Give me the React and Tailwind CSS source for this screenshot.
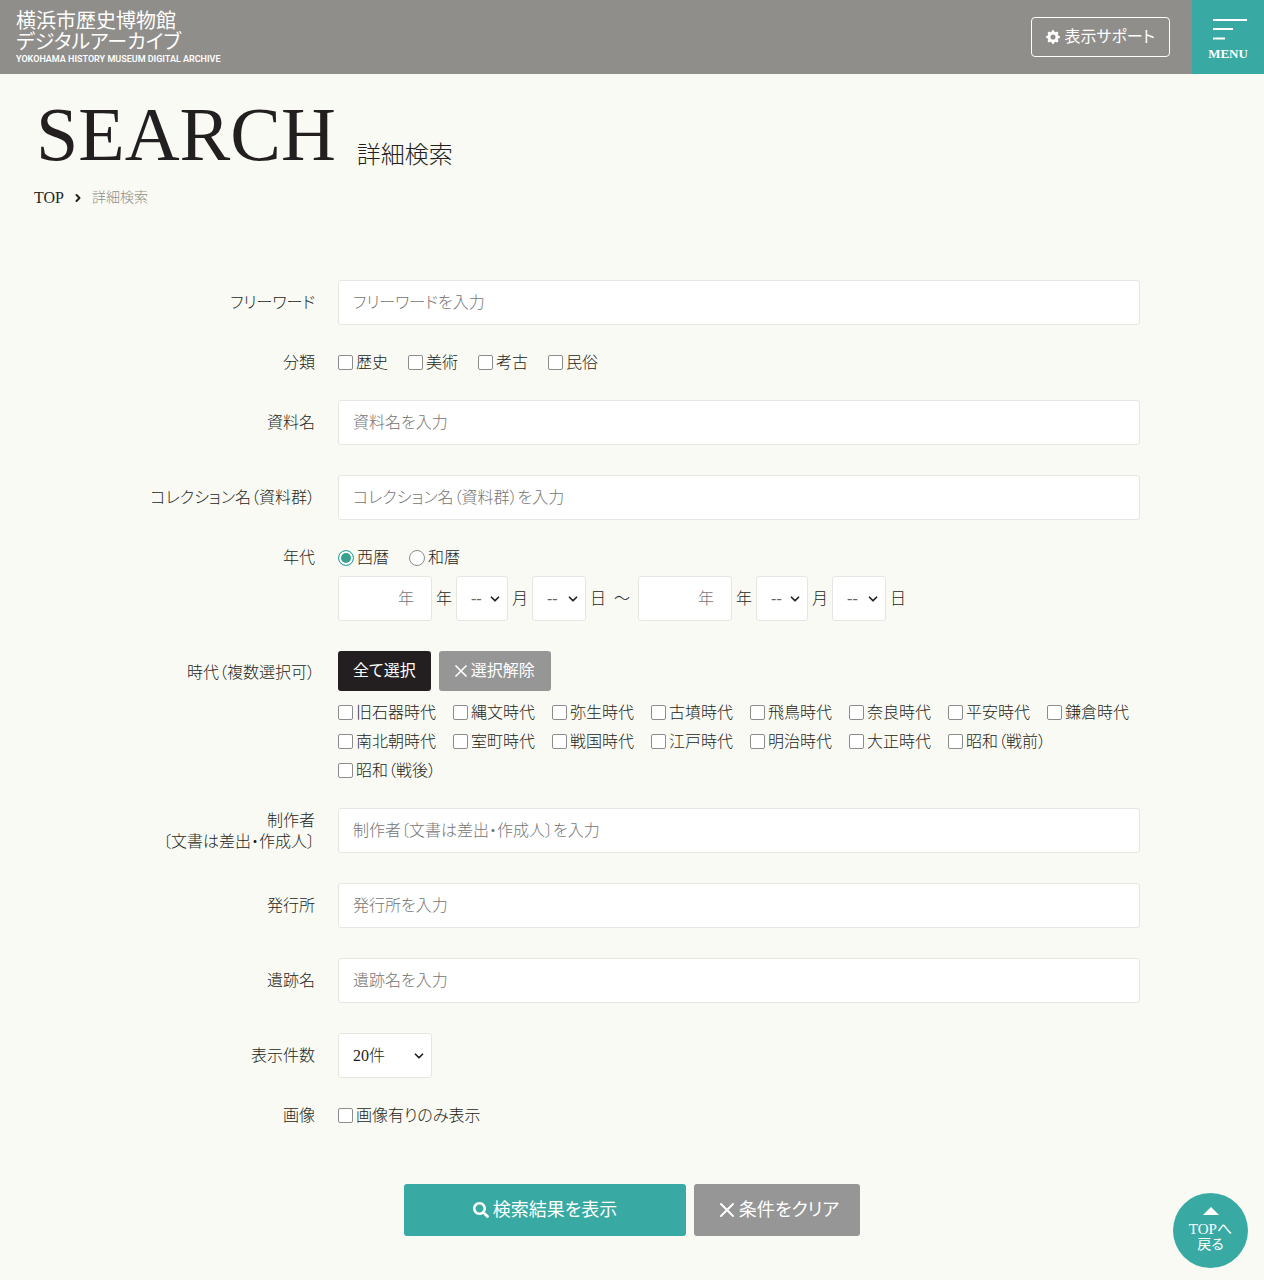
import React, { useState } from "react";
import { ChevronDown, ChevronRight, X } from "lucide-react";
import { BsGearFill } from "react-icons/bs";
import { FaSearch } from "react-icons/fa";

const categories = ["歴史", "美術", "考古", "民俗"];

const eras = [
  "旧石器時代",
  "縄文時代",
  "弥生時代",
  "古墳時代",
  "飛鳥時代",
  "奈良時代",
  "平安時代",
  "鎌倉時代",
  "南北朝時代",
  "室町時代",
  "戦国時代",
  "江戸時代",
  "明治時代",
  "大正時代",
  "昭和（戦前）",
  "昭和（戦後）",
];

const fieldStyle =
  "h-[45px] rounded-[3px] border border-[#e6e7e1] bg-white placeholder:text-[#757575] placeholder:opacity-100";

const months = Array.from({ length: 12 }, (_, i) => i + 1);
const days = Array.from({ length: 31 }, (_, i) => i + 1);

// フォームの1行（見出し＋テキスト入力）
const TextRow = ({ id, label, placeholder }) => (
  <>
    <label htmlFor={id} className="self-center text-right leading-[21px] whitespace-pre-line">
      {label}
    </label>
    <input id={id} type="text" placeholder={placeholder} className={`${fieldStyle} w-full min-w-0 px-3.5`} />
  </>
);

const Check = ({ label, checked, onChange }) => (
  <label className="flex items-center gap-[3px] leading-[15px] whitespace-nowrap">
    <input
      type="checkbox"
      checked={checked}
      onChange={onChange}
      className="size-[15px] shrink-0 appearance-none rounded-[2px] border border-[#8c8c8c] bg-white checked:border-[#38aaa3] checked:bg-[#38aaa3]"
    />
    {label}
  </label>
);

const Radio = ({ label, value, current, onChange }) => (
  <label className="flex items-center gap-[3px] leading-4">
    <input
      type="radio"
      name="calendar"
      value={value}
      checked={current === value}
      onChange={() => onChange(value)}
      className="size-4 shrink-0 appearance-none rounded-full border border-[#8c8c8c] bg-white checked:border-[#38aaa3] checked:bg-[#38a08f] checked:shadow-[inset_0_0_0_2px_white]"
    />
    {label}
  </label>
);

const Select = ({ id, className, children, label }) => (
  <span className={`relative inline-block ${className}`}>
    <select id={id} aria-label={label} className={`${fieldStyle} w-full appearance-none pl-3.5`}>
      {children}
    </select>
    <ChevronDown
      className="pointer-events-none absolute top-4 right-1.5 size-3.5 text-[#231f20]"
      strokeWidth={3}
      aria-hidden="true"
    />
  </span>
);

// 年月日の入力セット
const DateFields = ({ prefix, title }) => (
  <div className="flex items-center gap-1">
    <input
      id={`${prefix}-year`}
      type="text"
      placeholder="年"
      aria-label={`${title}年`}
      className={`${fieldStyle} w-[94px] pr-[17px] text-right`}
    />
    <label htmlFor={`${prefix}-year`}>年</label>
    <Select id={`${prefix}-month`} label={`${title}月`} className="w-[52px] text-[#666]">
      <option value="">--</option>
      {months.map((m) => (
        <option key={m}>{m}</option>
      ))}
    </Select>
    <label htmlFor={`${prefix}-month`}>月</label>
    <Select id={`${prefix}-day`} label={`${title}日`} className="w-[54px] text-[#666]">
      <option value="">--</option>
      {days.map((d) => (
        <option key={d}>{d}</option>
      ))}
    </Select>
    <label htmlFor={`${prefix}-day`}>日</label>
  </div>
);

const Header = () => (
  <header className="flex h-[74px] items-stretch justify-between bg-[#908e8a] text-white">
    <a href="#" className="pt-[11px] pl-4 font-normal">
      <span className="block text-xl leading-[21px]">横浜市歴史博物館</span>
      <span className="block text-xl leading-[21px]">デジタルアーカイブ</span>
      <span className="block font-['Roboto'] text-[9px] leading-3 font-semibold">
        YOKOHAMA HISTORY MUSEUM DIGITAL ARCHIVE
      </span>
    </a>
    <div className="flex items-center gap-[22px]">
      <button
        type="button"
        className="flex h-10 items-center gap-1 rounded-[4px] border border-white px-3.5 font-normal"
      >
        <BsGearFill className="size-3.5" aria-hidden="true" />
        表示サポート
      </button>
      <button
        type="button"
        className="flex h-full w-[72px] flex-col items-center bg-[#38aaa3] pt-[18px] text-[13px] font-bold"
      >
        <svg className="ml-1 h-[22px] w-[34px]" viewBox="0 0 34 22" stroke="white" strokeWidth="2" aria-hidden="true">
          <path d="M0 2h34M0 11h20M0 20.5h12" />
        </svg>
        <span className="mt-1 leading-5">MENU</span>
      </button>
    </div>
  </header>
);

const App = () => {
  const [calendar, setCalendar] = useState("seireki");
  const [selectedCategories, setSelectedCategories] = useState([]);
  const [selectedEras, setSelectedEras] = useState([]);
  const [imageOnly, setImageOnly] = useState(false);

  const toggle = (list, setList, name) =>
    setList(list.includes(name) ? list.filter((n) => n !== name) : [...list, name]);

  const clearAll = () => {
    setCalendar("seireki");
    setSelectedCategories([]);
    setSelectedEras([]);
    setImageOnly(false);
  };

  return (
    <div
      lang="ja"
      className="min-h-screen bg-[#f9faf4] font-['Liberation_Serif','Noto_Sans_CJK_JP',serif] text-base font-light text-[#231f20] [font-feature-settings:'palt']"
    >
      <Header />

      <main className="pb-16">
        <div className="px-[34px] pt-5">
          <h1 className="flex items-end gap-[21px] pl-0.5">
            <span className="text-[76px] leading-[80px]">SEARCH</span>
            <span className="text-2xl leading-[38px]">詳細検索</span>
          </h1>
          <nav aria-label="パンくず" className="mt-3 flex items-center gap-2 leading-6">
            <a href="#">TOP</a>
            <ChevronRight className="size-3" strokeWidth={4} aria-hidden="true" />
            <span className="text-sm leading-6 text-[#8f8f8b]">詳細検索</span>
          </nav>
        </div>

        {/* 検索フォーム */}
        <form
          className="mx-auto mt-[70px] max-w-[1016px]"
          onSubmit={(e) => e.preventDefault()}
          onReset={clearAll}
        >
          <div className="grid grid-cols-[191px_minmax(0,1fr)] gap-x-[23px] gap-y-[30px]">
            <TextRow id="freeword" label="フリーワード" placeholder="フリーワードを入力" />

            <span id="category-label" className="text-right leading-[15px]">分類</span>
            <div role="group" aria-labelledby="category-label" className="flex flex-wrap gap-x-5 gap-y-3.5">
              {categories.map((name) => (
                <Check
                  key={name}
                  label={name}
                  checked={selectedCategories.includes(name)}
                  onChange={() => toggle(selectedCategories, setSelectedCategories, name)}
                />
              ))}
            </div>

            <TextRow id="title" label="資料名" placeholder="資料名を入力" />
            <TextRow
              id="collection"
              label="コレクション名（資料群）"
              placeholder="コレクション名（資料群）を入力"
            />

            <span id="date-label" className="text-right leading-4">年代</span>
            <div role="group" aria-labelledby="date-label">
              <div className="flex gap-5">
                <Radio label="西暦" value="seireki" current={calendar} onChange={setCalendar} />
                <Radio label="和暦" value="wareki" current={calendar} onChange={setCalendar} />
              </div>
              <div className="mt-2.5 flex flex-wrap items-center gap-2">
                <DateFields prefix="from" title="開始" />
                <span>〜</span>
                <DateFields prefix="to" title="終了" />
              </div>
            </div>

            <span id="era-label" className="pt-3.5 text-right leading-4">時代（複数選択可）</span>
            <div role="group" aria-labelledby="era-label">
              <div className="flex gap-2">
                <button
                  type="button"
                  onClick={() => setSelectedEras(eras)}
                  className="h-10 rounded-[3px] bg-[#231f20] px-[15px] font-normal text-white"
                >
                  全て選択
                </button>
                <button
                  type="button"
                  onClick={() => setSelectedEras([])}
                  className="flex h-10 items-center rounded-[3px] bg-[#969696] pr-4 pl-3 font-normal text-white"
                >
                  <X className="size-5" aria-hidden="true" />
                  選択解除
                </button>
              </div>
              <div className="mt-3.5 flex flex-wrap gap-x-[17px] gap-y-3.5">
                {eras.map((name) => (
                  <Check
                    key={name}
                    label={name}
                    checked={selectedEras.includes(name)}
                    onChange={() => toggle(selectedEras, setSelectedEras, name)}
                  />
                ))}
              </div>
            </div>

            <TextRow
              id="creator"
              label={"制作者\n〔文書は差出・作成人〕"}
              placeholder="制作者〔文書は差出・作成人〕を入力"
            />
            <TextRow id="publisher" label="発行所" placeholder="発行所を入力" />
            <TextRow id="site" label="遺跡名" placeholder="遺跡名を入力" />

            <label htmlFor="count" className="self-center text-right">表示件数</label>
            <div className="flex">
              <Select id="count" className="w-[94px]">
                <option>20件</option>
                <option>50件</option>
                <option>100件</option>
              </Select>
            </div>

            <span id="image-label" className="text-right leading-[15px]">画像</span>
            <div role="group" aria-labelledby="image-label" className="flex">
              <Check
                label="画像有りのみ表示"
                checked={imageOnly}
                onChange={() => setImageOnly(!imageOnly)}
              />
            </div>
          </div>

          <div className="mt-[61px] flex flex-wrap justify-center gap-2 text-lg font-normal text-white">
            <button
              type="submit"
              className="flex h-[52px] w-[282px] items-center justify-center gap-1 rounded-[3px] bg-[#38aaa3]"
            >
              <FaSearch className="size-4" aria-hidden="true" />
              検索結果を表示
            </button>
            <button
              type="reset"
              className="flex h-[52px] w-[166px] items-center justify-center rounded-[3px] bg-[#969696]"
            >
              <X className="size-6" aria-hidden="true" />
              条件をクリア
            </button>
          </div>
        </form>
      </main>

      {/* ページ上部へ戻る */}
      <a
        href="#"
        className="fixed right-4 bottom-3 flex size-[75px] flex-col items-center rounded-full bg-[#38aaa3] pt-3.5 text-[15px] leading-4 font-normal text-white"
      >
        <svg className="mb-1.5 h-2 w-4" viewBox="0 0 16 8" fill="white" aria-hidden="true">
          <path d="M8 0l8 8H0z" />
        </svg>
        <span>TOPへ</span>
        <span className="text-sm leading-4">戻る</span>
      </a>
    </div>
  );
};

export default App;
